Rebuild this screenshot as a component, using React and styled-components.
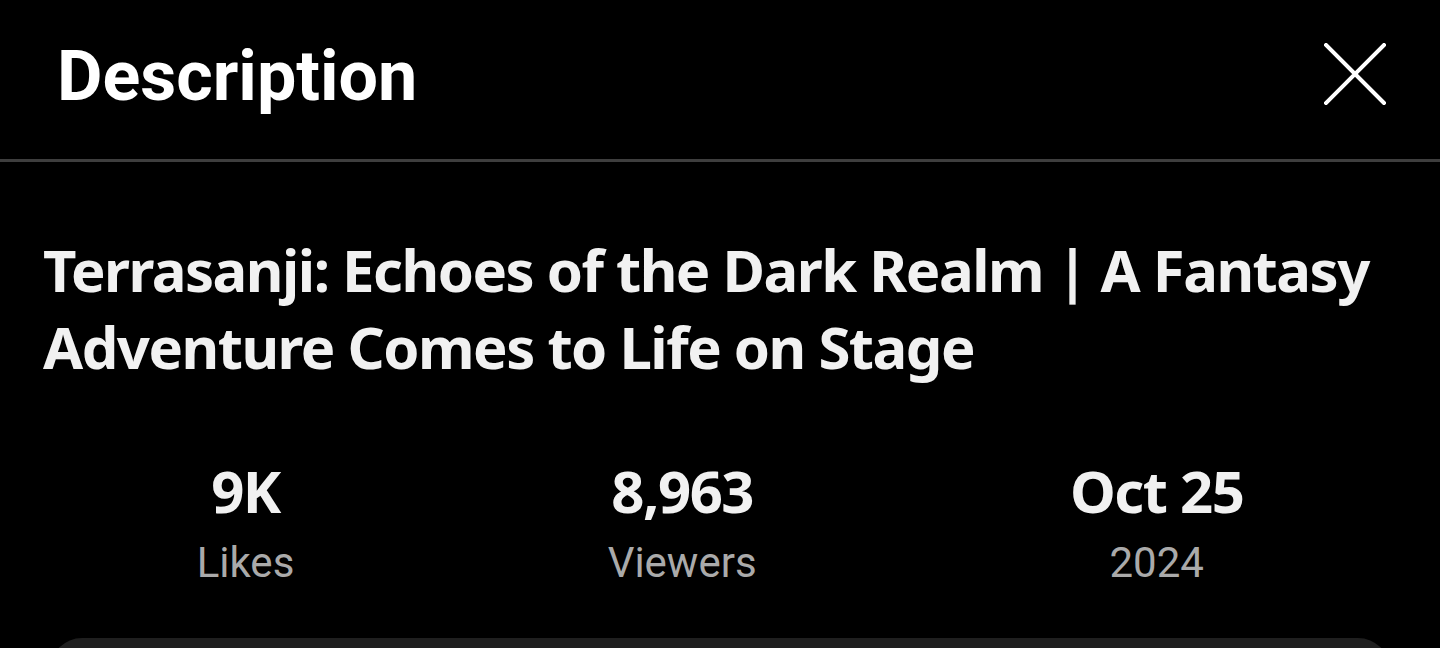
import styled, { createGlobalStyle } from "styled-components";

const GlobalStyle = createGlobalStyle`
  html, body {
    margin: 0;
    padding: 0;
    background: #000;
  }
  body {
    font-family: Roboto, "Liberation Sans", sans-serif;
    color: #f1f1f1;
    overflow: hidden;
  }
`;

const Sheet = styled.div`
  width: 1440px;
  height: 648px;
  background: #000;
  display: flex;
  flex-direction: column;
  overflow: hidden;

  & > * {
    flex-shrink: 0;
  }
`;

const Header = styled.div`
  height: 159px;
  display: flex;
  align-items: center;
  justify-content: space-between;
  padding: 0 52px 0 57px;
  border-bottom: 3px solid #3e3e3e;
  box-sizing: content-box;
`;

const HeaderTitle = styled.h1`
  margin: 0;
  margin-top: -8px;
  font-family: Roboto, "Liberation Sans", sans-serif;
  font-weight: 700;
  font-size: 70px;
  line-height: 1;
  color: #fff;
`;

const CloseButton = styled.button`
  width: 66px;
  height: 66px;
  padding: 0;
  border: 0;
  background: transparent;
  display: flex;
  align-items: center;
  justify-content: center;
  cursor: pointer;
  margin-top: -11px;
`;

const VideoTitle = styled.h2`
  margin: 69px 0 0;
  padding: 0 43px;
  font-family: "Noto Sans", "Open Sans", sans-serif;
  font-weight: 700;
  font-size: 58px;
  letter-spacing: -1.5px;
  line-height: 77px;
  color: #f1f1f1;
`;

const Stats = styled.div`
  display: flex;
  justify-content: space-around;
  padding: 0 40px;
  margin-top: 72px;
`;

const Stat = styled.div`
  display: flex;
  flex-direction: column;
  align-items: center;
`;

const StatValue = styled.div`
  font-family: "Noto Sans", "Open Sans", sans-serif;
  font-weight: 700;
  font-size: 58px;
  letter-spacing: -1.5px;
  line-height: 68px;
  color: #f1f1f1;
`;

const StatLabel = styled.div`
  margin-top: 13px;
  font-family: Roboto, "Liberation Sans", sans-serif;
  font-weight: 400;
  font-size: 42px;
  line-height: 50px;
  color: #aaaaaa;
`;

const Card = styled.div`
  margin: 50px 50px 0;
  height: 120px;
  border-radius: 32px;
  background: #1f1f1f;
`;

const stats = [
  { value: "9K", label: "Likes" },
  { value: "8,963", label: "Viewers" },
  { value: "Oct 25", label: "2024" },
];

const CloseIcon = () => (
  <svg width="62" height="62" viewBox="0 0 62 62" fill="none">
    <path
      d="M2 2 L60 60 M60 2 L2 60"
      stroke="#fff"
      strokeWidth="4"
      strokeLinecap="square"
    />
  </svg>
);

export default function App() {
  return (
    <>
      <GlobalStyle />
      <Sheet>
        <Header>
          <HeaderTitle>Description</HeaderTitle>
          <CloseButton aria-label="Close">
            <CloseIcon />
          </CloseButton>
        </Header>
        <VideoTitle>
          Terrasanji: Echoes of the Dark Realm | A Fantasy Adventure Comes to
          Life on Stage
        </VideoTitle>
        <Stats>
          {stats.map((s) => (
            <Stat key={s.label}>
              <StatValue>{s.value}</StatValue>
              <StatLabel>{s.label}</StatLabel>
            </Stat>
          ))}
        </Stats>
        <Card />
      </Sheet>
    </>
  );
}
